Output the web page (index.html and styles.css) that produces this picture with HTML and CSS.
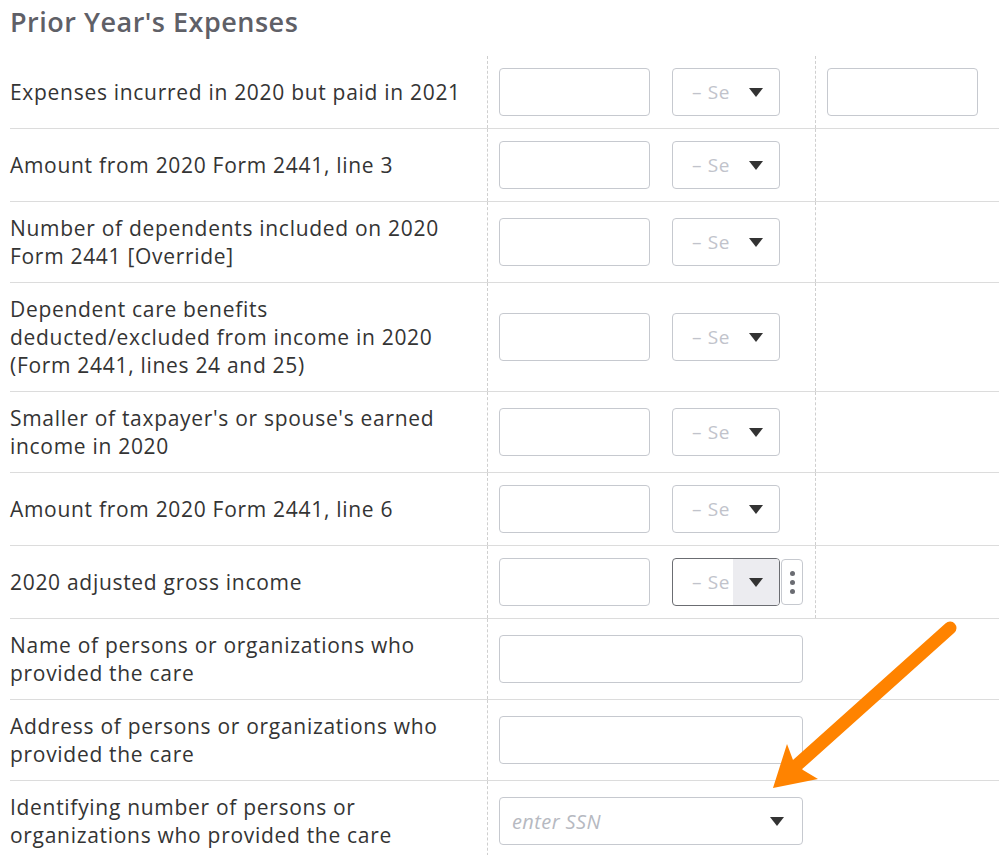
FILE: index.html
```
<!DOCTYPE html>
<html lang="en">

<head>
    <meta charset="UTF-8">
    <meta name="viewport" content="width=device-width, initial-scale=1.0">
    <title>Prior Year's Expenses</title>
    <link rel="stylesheet" href="styles.css">
</head>

<body>
    <div class="page">
        <h2 class="title">Prior Year's Expenses</h2>

        <div class="form">
            <div class="row">
                <div class="label">Expenses incurred in 2020 but paid in 2021</div>
                <div class="cell">
                    <input class="amount" type="text">
                    <div class="select"><span class="select-text">– Se</span><span class="caret"></span></div>
                </div>
                <div class="cell">
                    <input class="amount" type="text">
                </div>
            </div>
            <div class="row">
                <div class="label">Amount from 2020 Form 2441, line 3</div>
                <div class="cell">
                    <input class="amount" type="text">
                    <div class="select"><span class="select-text">– Se</span><span class="caret"></span></div>
                </div>
                <div class="cell"></div>
            </div>
            <div class="row">
                <div class="label">Number of dependents included on 2020 Form 2441 [Override]</div>
                <div class="cell">
                    <input class="amount" type="text">
                    <div class="select"><span class="select-text">– Se</span><span class="caret"></span></div>
                </div>
                <div class="cell"></div>
            </div>
            <div class="row">
                <div class="label">Dependent care benefits deducted/excluded from income in 2020 (Form 2441, lines 24 and 25)</div>
                <div class="cell">
                    <input class="amount" type="text">
                    <div class="select"><span class="select-text">– Se</span><span class="caret"></span></div>
                </div>
                <div class="cell"></div>
            </div>
            <div class="row">
                <div class="label">Smaller of taxpayer's or spouse's earned income in 2020</div>
                <div class="cell">
                    <input class="amount" type="text">
                    <div class="select"><span class="select-text">– Se</span><span class="caret"></span></div>
                </div>
                <div class="cell"></div>
            </div>
            <div class="row">
                <div class="label">Amount from 2020 Form 2441, line 6</div>
                <div class="cell">
                    <input class="amount" type="text">
                    <div class="select"><span class="select-text">– Se</span><span class="caret"></span></div>
                </div>
                <div class="cell"></div>
            </div>
            <div class="row">
                <div class="label">2020 adjusted gross income</div>
                <div class="cell">
                    <input class="amount" type="text">
                    <div class="select active"><span class="select-text">– Se</span><span class="caret"></span></div>
                    <div class="kebab"><i></i><i></i><i></i></div>
                </div>
                <div class="cell"></div>
            </div>
            <div class="row">
                <div class="label">Name of persons or organizations who provided the care</div>
                <div class="cell wide">
                    <input class="text-field" type="text">
                </div>
            </div>
            <div class="row">
                <div class="label">Address of persons or organizations who provided the care</div>
                <div class="cell wide">
                    <input class="text-field" type="text">
                </div>
            </div>
            <div class="row">
                <div class="label">Identifying number of persons or organizations who provided the care</div>
                <div class="cell wide">
                    <div class="ssn"><span class="placeholder">enter SSN</span><span class="caret"></span></div>
                </div>
            </div>
        </div>

        <!-- callout arrow -->
        <svg class="callout" width="999" height="855" viewBox="0 0 999 855">
            <line x1="950" y1="628" x2="797" y2="765" stroke="#ff8300" stroke-width="13" stroke-linecap="round" />
            <polygon points="773,788 787,744 793,760 803,770 818,779" fill="#ff8300" />
        </svg>
    </div>
</body>

</html>
```

FILE: styles.css
```
* {
    margin: 0;
    padding: 0;
    box-sizing: border-box;
    font-family: "Open Sans", "Noto Sans", sans-serif;
}

body {
    background: #fff;
    overflow: hidden;
}

.page {
    position: relative;
    padding-left: 10px;
    height: 855px;
}

.title {
    font-size: 27px;
    font-weight: 600;
    letter-spacing: 0.5px;
    color: #5f6067;
    line-height: 32px;
    padding-top: 6px;
    height: 56px;
}

.row {
    display: grid;
    grid-template-columns: 477px 328px 1fr;
    align-items: stretch;
    border-bottom: 1px solid #dcdcdc;
}

.label {
    font-size: 21px;
    letter-spacing: 0.7px;
    line-height: 28px;
    color: #343434;
    padding: 12px 22px 12px 0;
    display: flex;
    align-items: center;
}

.cell {
    display: flex;
    align-items: center;
    padding: 12px 0 12px 11px;
    border-left: 1px dashed #cfcfcf;
}

.cell.wide {
    grid-column: span 2;
}

.amount,
.text-field {
    height: 48px;
    border: 1px solid #c6c9cf;
    border-radius: 4px;
    outline: none;
    background: #fff;
}

.amount {
    width: 151px;
}

.text-field {
    width: 304px;
}

.select {
    display: flex;
    align-items: center;
    width: 108px;
    height: 48px;
    margin-left: 22px;
    border: 1px solid #c6c9cf;
    border-radius: 4px;
    overflow: hidden;
}

.select-text {
    width: 60px;
    padding-left: 19px;
    white-space: nowrap;
    font-size: 19px;
    letter-spacing: 0.6px;
    color: #c1c3cb;
}

.caret {
    display: flex;
    align-items: center;
    justify-content: center;
    width: 46px;
    height: 100%;
}

.caret::after {
    content: "";
    border-left: 7px solid transparent;
    border-right: 7px solid transparent;
    border-top: 9px solid #333;
}

.select.active {
    border-color: #6b6d72;
}

.select.active .caret {
    background: #ececf0;
}

.kebab {
    width: 22px;
    height: 46px;
    margin-left: 1px;
    border: 1px solid #c6c9cf;
    border-radius: 4px;
    display: flex;
    flex-direction: column;
    align-items: center;
    justify-content: center;
    gap: 4px;
}

.kebab i {
    width: 5px;
    height: 5px;
    border-radius: 50%;
    background: #6a6c72;
}

.ssn {
    display: flex;
    align-items: center;
    justify-content: space-between;
    width: 304px;
    height: 48px;
    border: 1px solid #c6c9cf;
    border-radius: 4px;
    padding-left: 12px;
}

.placeholder {
    font-size: 20px;
    font-style: italic;
    letter-spacing: 0.4px;
    color: #b6b9c1;
}

.ssn .caret {
    width: 50px;
}

.callout {
    position: absolute;
    left: 0;
    top: 0;
    pointer-events: none;
}
```
